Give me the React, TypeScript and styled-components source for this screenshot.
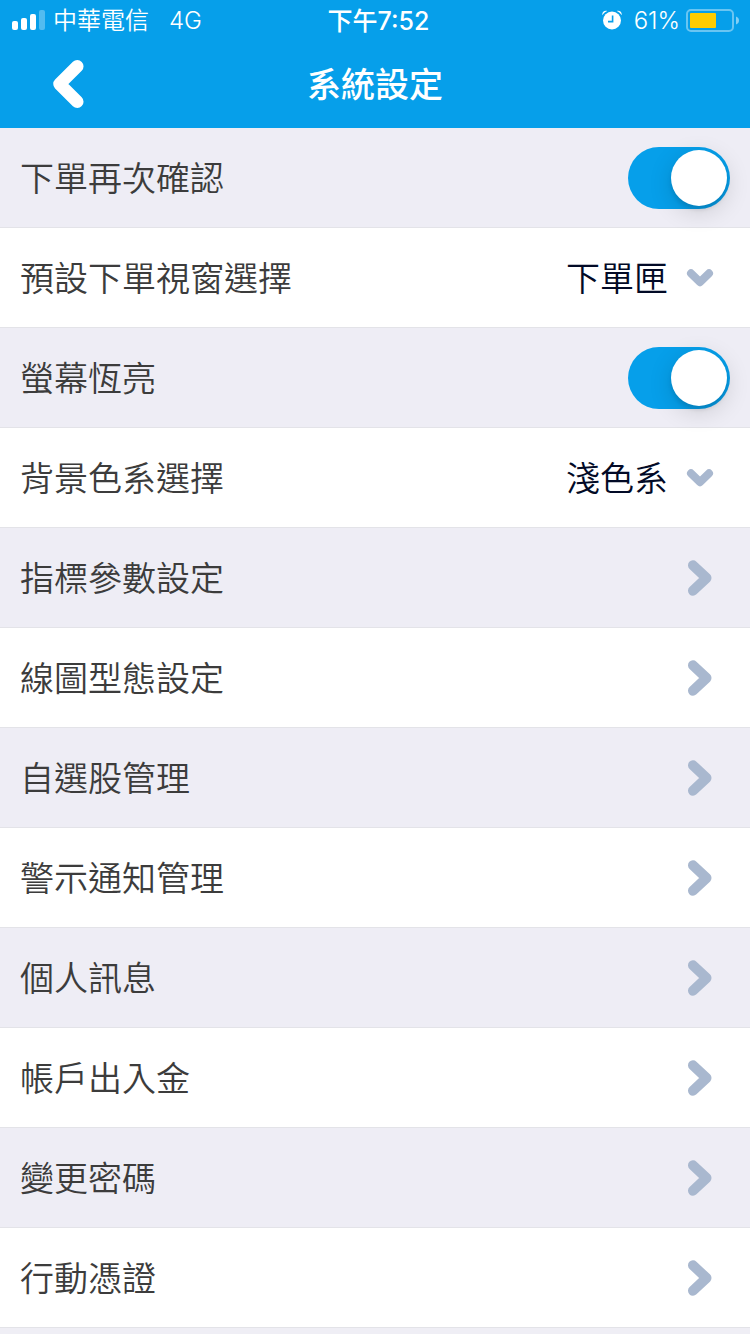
import React, { useState } from 'react';
import styled, { createGlobalStyle } from 'styled-components';

const GlobalStyle = createGlobalStyle`
  *, *::before, *::after { box-sizing: border-box; }
  body {
    margin: 0;
    background: #efeef5;
    color: #3c3c3c;
    font-family: "Noto Sans CJK TC", sans-serif;
    font-size: 34px;
    font-weight: 350;
  }
`;

const Page = styled.div`
  display: flex;
  flex-direction: column;
  min-height: 100vh;
`;

const TopArea = styled.div`
  background: #069fea;
  color: #fff;
`;

const StatusBar = styled.div`
  display: grid;
  grid-template-columns: 1fr auto 1fr;
  align-items: center;
  height: 40px;
  padding: 0 11px 0 12px;
  font-family: Inter, "Noto Sans CJK TC", sans-serif;
  font-size: 24px;
  line-height: 38px;
`;

const StatusGroup = styled.div<{ $end?: boolean }>`
  display: flex;
  align-items: center;
  justify-content: ${({ $end }) => ($end ? 'flex-end' : 'flex-start')};
  gap: ${({ $end }) => ($end ? '6px' : '8px')};
`;

const StatusText = styled.span`
  padding-top: 2px;
`;

const Network = styled(StatusText)`
  margin-left: 12px;
`;

const Percent = styled(StatusText)`
  margin-left: 6px;
`;

const Clock = styled.time`
  padding: 2px 0 0 6px;
  font-size: 25px;
  font-weight: 500;
`;

const NavBar = styled.header`
  display: grid;
  grid-template-columns: 1fr auto 1fr;
  align-items: center;
  height: 88px;
  padding: 0 44px;
`;

const BackButton = styled.button`
  display: flex;
  justify-self: start;
  padding: 8px;
  border: 0;
  background: none;
  color: inherit;
`;

const Title = styled.h1`
  margin: 0;
  padding-bottom: 2px;
  font-size: 34px;
  font-weight: 500;
  line-height: 48px;
`;

const List = styled.ul`
  margin: 0;
  padding: 0;
  list-style: none;
`;

const Row = styled.li`
  display: flex;
  height: 100px;
  background: #fff;
  box-shadow: inset 0 -1px 0 #e3e3e8;

  &:nth-child(odd) { background-color: #eeedf5; }
`;

const FieldRow = styled.div`
  display: flex;
  flex: 1;
  align-items: center;
  justify-content: space-between;
  padding: 0 20px;
`;

const RowLink = styled.a`
  display: flex;
  flex: 1;
  align-items: center;
  justify-content: space-between;
  padding: 0 36px 0 20px;
  color: inherit;
  text-decoration: none;
`;

const RowText = styled.span`
  padding-bottom: 2px;
  line-height: 48px;
`;

const Switch = styled.input`
  appearance: none;
  display: flex;
  width: 102px;
  height: 62px;
  margin: 0;
  padding: 3px;
  border-radius: 31px;
  background: #c9cdd6;
  cursor: pointer;

  &::before {
    content: "";
    width: 56px;
    height: 56px;
    border-radius: 50%;
    background: #fff;
    box-shadow: 0 6px 24px rgba(0, 0, 0, 0.14), 0 4px 4px rgba(0, 0, 0, 0.1);
  }

  &:checked {
    justify-content: flex-end;
    background: #069fea;
  }
`;

const Picker = styled.div`
  display: grid;
  align-items: center;
  justify-items: end;

  > * { grid-area: 1 / 1; }
  > svg { margin-right: 16px; pointer-events: none; }
`;

const Select = styled.select`
  appearance: none;
  height: 64px;
  padding: 0 62px 2px 0;
  border: 0;
  background: transparent;
  color: #020a26;
  font: inherit;
  line-height: 48px;
`;

const SignalIcon = () => (
  <svg width="33" height="20" viewBox="0 0 33 20" fill="#fff" aria-hidden="true">
    <rect x="0" y="11" width="6" height="9" rx="2" />
    <rect x="9" y="8" width="6" height="12" rx="2" />
    <rect x="18" y="4" width="6" height="16" rx="2" />
    <rect x="27" y="0" width="6" height="20" rx="2" opacity="0.3" />
  </svg>
);

const AlarmIcon = () => (
  <svg width="20" height="20" viewBox="0 0 20 20" aria-hidden="true">
    <circle cx="10" cy="10.5" r="9" fill="#fff" />
    <path d="M10.6 5.5V11.6H6" fill="none" stroke="#069fea" strokeWidth="1.6" />
    <path d="M.3 5.2C-.1 2 2 .2 5.3.9C3.200 1.600 1.300 3.200.3 5.200ZM19.700 5.200C20.100 2 18 .2 14.700.9C16.800 1.600 18.700 3.200 19.700 5.200Z" fill="#fff" />
  </svg>
);

const BatteryIcon = () => (
  <svg width="53" height="24" viewBox="0 0 53 24" aria-hidden="true">
    <rect x="1" y="2" width="46" height="21" rx="4" fill="none" stroke="#fff" strokeOpacity="0.4" strokeWidth="2" />
    <rect x="4" y="5" width="26" height="15" rx="1" fill="#ffcc00" />
    <path d="M50 8.500C52 9.200 53 10.700 53 12.500S52 15.800 50 16.500Z" fill="#fff" fillOpacity="0.5" />
  </svg>
);

const BackIcon = () => (
  <svg width="32" height="48" viewBox="0 0 32 48" fill="none" stroke="#fff" strokeWidth="12.500" strokeLinecap="round" strokeLinejoin="round" aria-hidden="true">
    <path d="M25.300 6.300L7.500 24L25.300 41.700" />
  </svg>
);

const ForwardIcon = () => (
  <svg width="28" height="36" viewBox="0 0 28 36" fill="none" stroke="#a9b8cf" strokeWidth="10" strokeLinecap="round" strokeLinejoin="round" aria-hidden="true">
    <path d="M7 5.300L20.500 18L7 30.700" />
  </svg>
);

const DownIcon = () => (
  <svg width="28" height="18" viewBox="0 0 28 18" fill="none" stroke="#a9b8cf" strokeWidth="8" strokeLinecap="round" strokeLinejoin="round" aria-hidden="true">
    <path d="M5 4.300L14 13.200L23 4.300" />
  </svg>
);

function SwitchRow({ id, label }: { id: string; label: string }) {
  const [on, setOn] = useState(true);
  return (
    <Row>
      <FieldRow>
        <RowText as="label" htmlFor={id}>{label}</RowText>
        <Switch id={id} type="checkbox" role="switch" checked={on} onChange={(e) => setOn(e.target.checked)} />
      </FieldRow>
    </Row>
  );
}

function SelectRow({ id, label, options }: { id: string; label: string; options: string[] }) {
  return (
    <Row>
      <FieldRow>
        <RowText as="label" htmlFor={id}>{label}</RowText>
        <Picker>
          <Select id={id} defaultValue={options[0]}>
            {options.map((option) => (
              <option key={option}>{option}</option>
            ))}
          </Select>
          <DownIcon />
        </Picker>
      </FieldRow>
    </Row>
  );
}

const links = [
  { href: '#indicators', label: '指標參數設定' },
  { href: '#chart', label: '線圖型態設定' },
  { href: '#watchlist', label: '自選股管理' },
  { href: '#alerts', label: '警示通知管理' },
  { href: '#messages', label: '個人訊息' },
  { href: '#transfer', label: '帳戶出入金' },
  { href: '#password', label: '變更密碼' },
  { href: '#certificate', label: '行動憑證' },
];

export default function App() {
  return (
    <Page lang="zh-Hant">
      <GlobalStyle />
      <TopArea>
        <StatusBar>
          <StatusGroup>
            <SignalIcon />
            <StatusText>中華電信</StatusText>
            <Network>4G</Network>
          </StatusGroup>
          <Clock>下午7:52</Clock>
          <StatusGroup $end>
            <AlarmIcon />
            <Percent>61%</Percent>
            <BatteryIcon />
          </StatusGroup>
        </StatusBar>
        <NavBar>
          <BackButton type="button" aria-label="返回">
            <BackIcon />
          </BackButton>
          <Title>系統設定</Title>
        </NavBar>
      </TopArea>
      <main>
        <List>
          <SwitchRow id="confirm-order" label="下單再次確認" />
          <SelectRow id="order-window" label="預設下單視窗選擇" options={['下單匣']} />
          <SwitchRow id="keep-awake" label="螢幕恆亮" />
          <SelectRow id="color-scheme" label="背景色系選擇" options={['淺色系']} />
          {links.map(({ href, label }) => (
            <Row key={href}>
              <RowLink href={href}>
                <RowText>{label}</RowText>
                <ForwardIcon />
              </RowLink>
            </Row>
          ))}
        </List>
      </main>
    </Page>
  );
}
